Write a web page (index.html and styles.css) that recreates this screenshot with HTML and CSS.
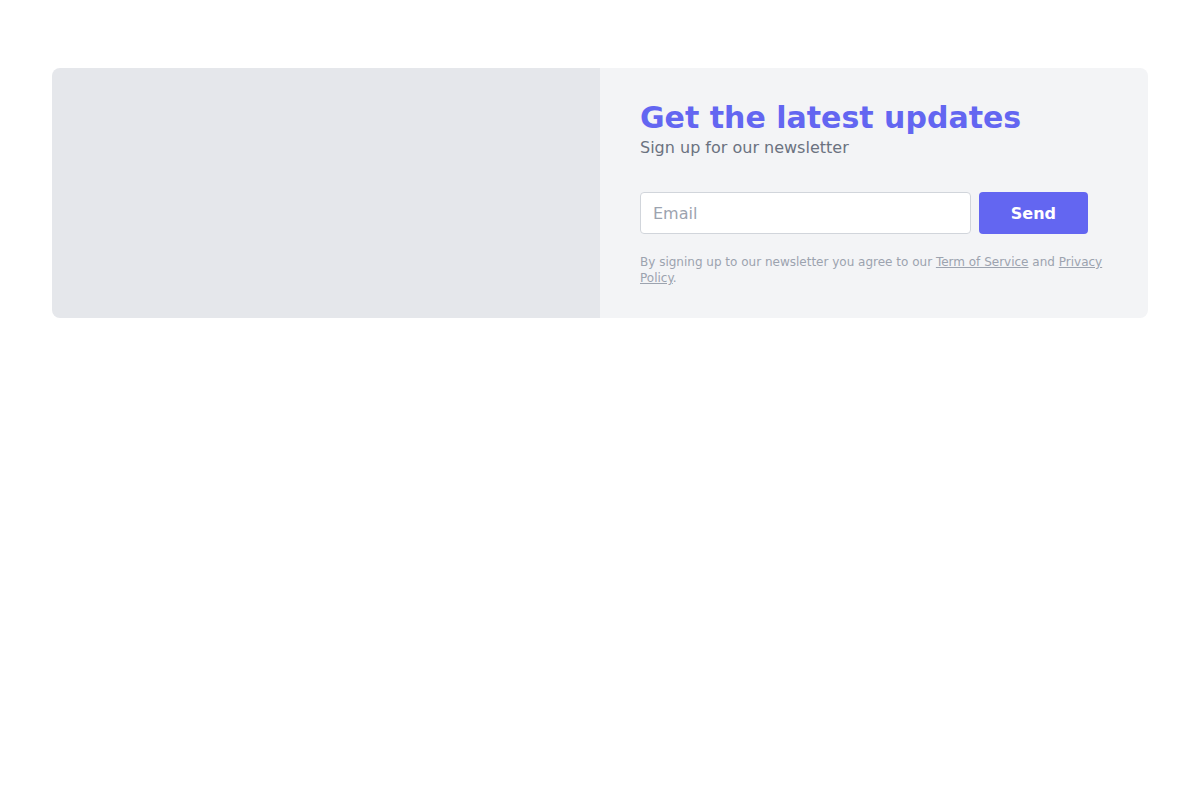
FILE: index.html
```html
<!DOCTYPE html>
<html lang="en">
<head>
    <meta charset="UTF-8">
    <meta name="viewport" content="width=device-width, initial-scale=1.0">
    <title>Newsletter</title>
    <link rel="stylesheet" href="styles.css">
</head>
<body>
    <div class="page">
        <div class="newsletter-card">
            <div class="newsletter-image"></div>

            <div class="newsletter-body">
                <h1>Get the latest updates</h1>
                <p class="subtitle">Sign up for our newsletter</p>

                <form class="signup-form">
                    <input type="email" placeholder="Email">
                    <button type="submit">Send</button>
                </form>

                <p class="terms">
                    By signing up to our newsletter you agree to our <a href="#">Term of Service</a> and <a href="#">Privacy Policy</a>.
                </p>
            </div>
        </div>
    </div>
</body>
</html>
```

FILE: styles.css
```css
* {
    margin: 0;
    padding: 0;
    box-sizing: border-box;
}

body {
    font-family: 'DejaVu Sans', sans-serif;
    background: #fff;
}

.page {
    padding: 68px 52px;
}

.newsletter-card {
    display: flex;
    border-radius: 8px;
    overflow: hidden;
    min-height: 250px;
}

.newsletter-image {
    width: 50%;
    background: #e5e7eb;
}

.newsletter-body {
    width: 50%;
    background: #f3f4f6;
    padding: 32px 40px;
}

.newsletter-body h1 {
    color: #6366f1;
    font-size: 30px;
    line-height: 36px;
    font-weight: bold;
}

.subtitle {
    color: #6b7280;
    font-size: 16px;
    line-height: 24px;
}

.signup-form {
    display: flex;
    gap: 8px;
    max-width: 448px;
    margin-top: 32px;
}

.signup-form input {
    flex: 1;
    min-width: 0;
    height: 42px;
    padding: 8px 12px;
    border: 1px solid #d1d5db;
    border-radius: 4px;
    background: #fff;
    font-family: inherit;
    font-size: 16px;
    color: #374151;
}

.signup-form input::placeholder {
    color: #9ca3af;
}

.signup-form input:focus {
    outline: none;
    border-color: #6366f1;
}

.signup-form button {
    height: 42px;
    padding: 0 32px;
    background: #6366f1;
    color: #fff;
    border: none;
    border-radius: 4px;
    font-family: inherit;
    font-size: 16px;
    font-weight: bold;
    cursor: pointer;
}

.terms {
    margin-top: 20px;
    color: #9ca3af;
    font-size: 12px;
    line-height: 16px;
}

.terms a {
    color: #9ca3af;
    text-decoration: underline;
}
```
